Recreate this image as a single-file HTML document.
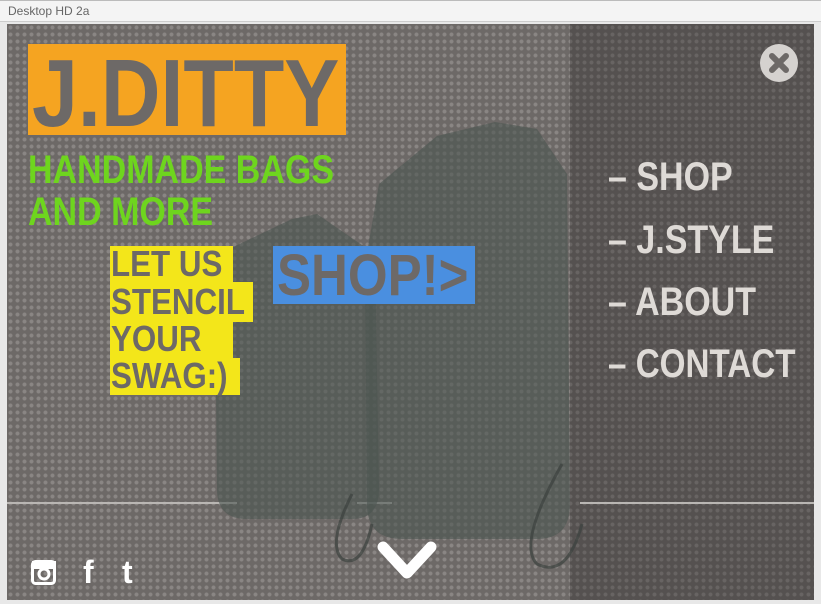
<!DOCTYPE html>
<html><head><meta charset="utf-8"><style>
*{margin:0;padding:0;box-sizing:border-box}
body{width:821px;height:604px;background:#e8e8e8;position:relative;overflow:hidden;font-family:"Liberation Sans",sans-serif}
.bar{position:absolute;left:0;top:0;width:821px;height:22px;background:#f4f4f4;border-top:1px solid #bbb;border-bottom:1px solid #ccc;font-size:12px;color:#666;padding:3px 0 0 8px}
.main{position:absolute;left:7px;top:24px;width:807px;height:576px;overflow:hidden;
background-color:#6d6967;
background-image:radial-gradient(circle,#8a8684 1.6px,transparent 2.4px);
background-size:7px 7px}
.right{position:absolute;left:563px;top:0;width:244px;height:576px;background:rgba(40,38,36,.35)}
.hline{position:absolute;top:478px;height:2px;background:#b9b6b3}
.t{position:absolute;white-space:nowrap;font-weight:bold;transform-origin:left top}
.logo{position:absolute;left:21px;top:20px;width:318px;height:91px;background:#f5a421}
.yellow{position:absolute;background:#f3e61a}
.blue{position:absolute;left:266px;top:222px;width:202px;height:58px;background:#4a8fe0}
.close{position:absolute;left:753px;top:20px;width:38px;height:38px;border-radius:50%;background:#d5d2cf}
</style></head><body>
<div class="bar">Desktop HD 2a</div>
<div class="main">
 <div class="right"></div>
 <div class="hline" style="left:0;width:230px"></div>
 <div class="hline" style="left:350px;width:35px"></div>
 <div class="hline" style="left:573px;width:234px"></div>
 <svg style="position:absolute;left:0;top:0" width="807" height="576">
  <g fill="rgba(75,85,80,.6)">
   <path d="M208,275 L222,225 L285,195 L310,190 L368,230 L372,465 Q372,495 345,495 L240,495 Q210,495 210,465 Z"/>
   <path d="M358,240 L372,160 L430,112 L488,98 L530,105 L560,150 L563,480 Q563,515 530,515 L395,515 Q360,515 360,480 Z"/>
  </g>
  <g fill="none" stroke="rgba(60,65,62,.7)" stroke-width="3">
   <path d="M345,470 Q320,520 335,535 Q355,545 365,500"/>
   <path d="M555,440 Q510,520 530,540 Q560,555 575,500"/>
  </g>
 </svg>
 <div class="logo"></div>
 <div class="t" style="left:25px;top:22px;font-size:96px;line-height:96px;color:#6d6967;transform:scaleX(0.86)">J.DITTY</div>
 <div class="t" style="left:21px;top:126px;font-size:40px;line-height:40px;color:#6ed51e;transform:scaleX(0.85)">HANDMADE BAGS</div>
 <div class="t" style="left:21px;top:168px;font-size:40px;line-height:40px;color:#6ed51e;transform:scaleX(0.85)">AND MORE</div>
 <div class="yellow" style="left:103px;top:222px;width:123px;height:149px"></div>
 <div class="yellow" style="left:200px;top:258px;width:46px;height:40px"></div>
 <div class="yellow" style="left:200px;top:334px;width:33px;height:37px"></div>
 <div class="t" style="left:104px;top:222px;font-size:36px;line-height:36px;color:#6d6967;transform:scaleX(0.87)">LET US</div>
 <div class="t" style="left:104px;top:260px;font-size:36px;line-height:36px;color:#6d6967;transform:scaleX(0.87)">STENCIL</div>
 <div class="t" style="left:104px;top:297px;font-size:36px;line-height:36px;color:#6d6967;transform:scaleX(0.87)">YOUR</div>
 <div class="t" style="left:104px;top:334px;font-size:36px;line-height:36px;color:#6d6967;transform:scaleX(0.87)">SWAG:)</div>
 <div class="blue"></div>
 <div class="t" style="left:270px;top:223px;font-size:58px;line-height:58px;color:#6d6967;transform:scaleX(0.88)">SHOP!&gt;</div>
 <div class="t" style="left:601px;top:133px;font-size:40px;line-height:40px;color:#dedad6;transform:scaleX(0.85)">– SHOP</div>
 <div class="t" style="left:601px;top:196px;font-size:40px;line-height:40px;color:#dedad6;transform:scaleX(0.85)">– J.STYLE</div>
 <div class="t" style="left:601px;top:258px;font-size:40px;line-height:40px;color:#dedad6;transform:scaleX(0.85)">– ABOUT</div>
 <div class="t" style="left:601px;top:320px;font-size:40px;line-height:40px;color:#dedad6;transform:scaleX(0.83)">– CONTACT</div>
 <div class="close"></div>
 <svg style="position:absolute;left:753px;top:20px" width="38" height="38"><path d="M12 12 L26 26 M26 12 L12 26" stroke="#6d6967" stroke-width="6" stroke-linecap="round"/></svg>
 <svg style="position:absolute;left:368px;top:515px" width="64" height="44"><path d="M8 8 L32 34 L56 8" fill="none" stroke="#fff" stroke-width="11" stroke-linecap="round" stroke-linejoin="round"/></svg>
 <svg style="position:absolute;left:24px;top:536px" width="26" height="26"><rect x="1.5" y="1.5" width="22" height="22" rx="3" fill="none" stroke="#fff" stroke-width="3"/><rect x="1" y="1" width="24" height="8" fill="#fff"/><circle cx="13" cy="14" r="5" fill="none" stroke="#fff" stroke-width="3"/></svg>
 <div style="position:absolute;left:76px;top:530px;color:#fff;font-size:32px;font-weight:bold">f</div>
 <div style="position:absolute;left:115px;top:530px;color:#fff;font-size:32px;font-weight:bold">t</div>
</div>
</body></html>
